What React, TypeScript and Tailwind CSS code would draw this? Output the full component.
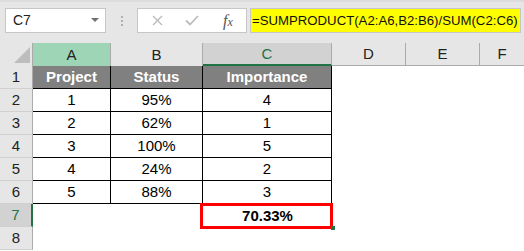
import React from "react";

const F = { fontFamily: '"Liberation Sans", Arial, sans-serif' };

const rows = [
  ["Project", "Status", "Importance"],
  ["1", "95%", "4"],
  ["2", "62%", "1"],
  ["3", "100%", "5"],
  ["4", "24%", "2"],
  ["5", "88%", "3"],
];

function RowHeader({ n, active }: { n: number; active?: boolean }) {
  return (
    <div
      className={
        "w-[33px] shrink-0 h-full flex items-center justify-center pt-[1px] text-[15px] border-b border-[#d0d0d0] " +
        (active
          ? "bg-[#d2d2d2] text-[#217346] border-r-2 border-r-[#217346]"
          : "bg-[#e6e6e6] text-[#222] border-r border-r-[#ababab]")
      }
    >
      {n}
    </div>
  );
}

export default function App() {
  return (
    <div className="w-[524px] h-[251px] bg-white overflow-hidden" style={F}>
      {/* Formula bar area */}
      <div className="h-[43px] bg-[#e6e6e6] border-t-2 border-[#dcdcdc] flex items-start pt-[6px] pl-[5px]">
        <div className="w-[101px] h-[25px] bg-white border border-[#c6c6c6] flex items-center pl-[7px] pr-[6px] text-[14px] text-[#222]">
          <span className="flex-1">C7</span>
          <svg width="8" height="5" viewBox="0 0 8 5">
            <polygon points="0,0 8,0 4,4" fill="#707070" />
          </svg>
        </div>
        <div className="w-[31px] h-[25px] flex flex-col items-center justify-center gap-[2px]">
          <div className="w-[2px] h-[2px] bg-[#b0b0b0]" />
          <div className="w-[2px] h-[2px] bg-[#b0b0b0]" />
          <div className="w-[2px] h-[2px] bg-[#b0b0b0]" />
        </div>
        <div className="w-[110px] h-[25px] bg-white border border-[#c6c6c6] flex items-center">
          <div className="w-[36px] flex justify-center pl-[2px]">
            <svg width="11" height="11" viewBox="0 0 11 11">
              <path d="M1 1 L10 10 M10 1 L1 10" stroke="#bcbcbc" strokeWidth="1.4" />
            </svg>
          </div>
          <div className="w-[36px] flex justify-center">
            <svg width="14" height="11" viewBox="0 0 14 11">
              <path d="M1 5.5 L5 9.5 L13 1" stroke="#bcbcbc" strokeWidth="1.8" fill="none" />
            </svg>
          </div>
          <div
            className="w-[36px] flex justify-center items-baseline text-[#555] italic"
            style={{ fontFamily: '"Liberation Serif", serif' }}
          >
            <span className="text-[16px]">f</span>
            <span className="text-[12px]">x</span>
          </div>
        </div>
        <div className="ml-[3px] w-[271px] h-[25px] bg-[#ffff00] border border-[#c6c6c6] flex items-center pl-[1px] text-[13.2px] text-[#111] whitespace-nowrap">
          =SUMPRODUCT(A2:A6,B2:B6)/SUM(C2:C6)
        </div>
      </div>

      {/* Column headers */}
      <div className="h-[23px] flex text-[15px] text-[#222]">
        <div className="w-[33px] shrink-0 bg-[#e6e6e6] border-r border-[#ababab] relative">
          <svg className="absolute left-0 top-0" width="33" height="23" viewBox="0 0 33 23">
            <polygon points="30,4 30,20 14,20" fill="#bdbdbd" />
          </svg>
        </div>
        <div className="w-[78px] shrink-0 bg-[#9fd5b7] border-r border-[#ababab] flex items-center justify-center pt-[1px]">A</div>
        <div className="w-[92px] shrink-0 bg-[#e6e6e6] border-r border-[#ababab] flex items-center justify-center pt-[1px]">B</div>
        <div className="w-[129px] shrink-0 bg-[#d2d2d2] border-r border-[#ababab] border-b-2 border-b-[#217346] flex items-center justify-center pt-[1px] text-[#217346]">C</div>
        <div className="w-[74px] shrink-0 bg-[#e6e6e6] border-r border-b border-[#ababab] flex items-center justify-center pt-[1px]">D</div>
        <div className="w-[74px] shrink-0 bg-[#e6e6e6] border-r border-b border-[#ababab] flex items-center justify-center pt-[1px]">E</div>
        <div className="flex-1 bg-[#e6e6e6] border-b border-[#ababab] flex items-center justify-center pt-[1px]">F</div>
      </div>

      {/* Data rows */}
      {rows.map((r, i) => {
        const head = i === 0;
        const cell =
          "shrink-0 h-full flex items-center justify-center pt-[1px] border-r border-b border-black text-[15px] " +
          (head ? "bg-[#808080] text-white font-bold" : "bg-white text-black");
        return (
          <div key={i} className="h-[23px] flex">
            <RowHeader n={i + 1} />
            <div className={cell + " w-[78px]"}>{r[0]}</div>
            <div className={cell + " w-[92px]"}>{r[1]}</div>
            <div className={cell + " w-[129px]"}>{r[2]}</div>
            <div className="flex-1" />
          </div>
        );
      })}

      {/* Row 7 */}
      <div className="h-[23px] flex">
        <RowHeader n={7} active />
        <div className="w-[78px] shrink-0" />
        <div className="w-[92px] shrink-0" />
        <div className="w-[129px] shrink-0 relative flex items-center justify-center pt-[1px] text-[15px] font-bold text-black">
          70.33%
          <div className="absolute left-[-3px] top-[-1px] w-[133px] h-[26px] border-[3px] border-[#ff0000]" />
          <div className="absolute right-[-3px] bottom-[-3px] w-[4px] h-[4px] bg-[#217346]" />
        </div>
        <div className="flex-1" />
      </div>

      {/* Row 8 */}
      <div className="h-[23px] flex">
        <RowHeader n={8} />
        <div className="flex-1" />
      </div>
    </div>
  );
}
